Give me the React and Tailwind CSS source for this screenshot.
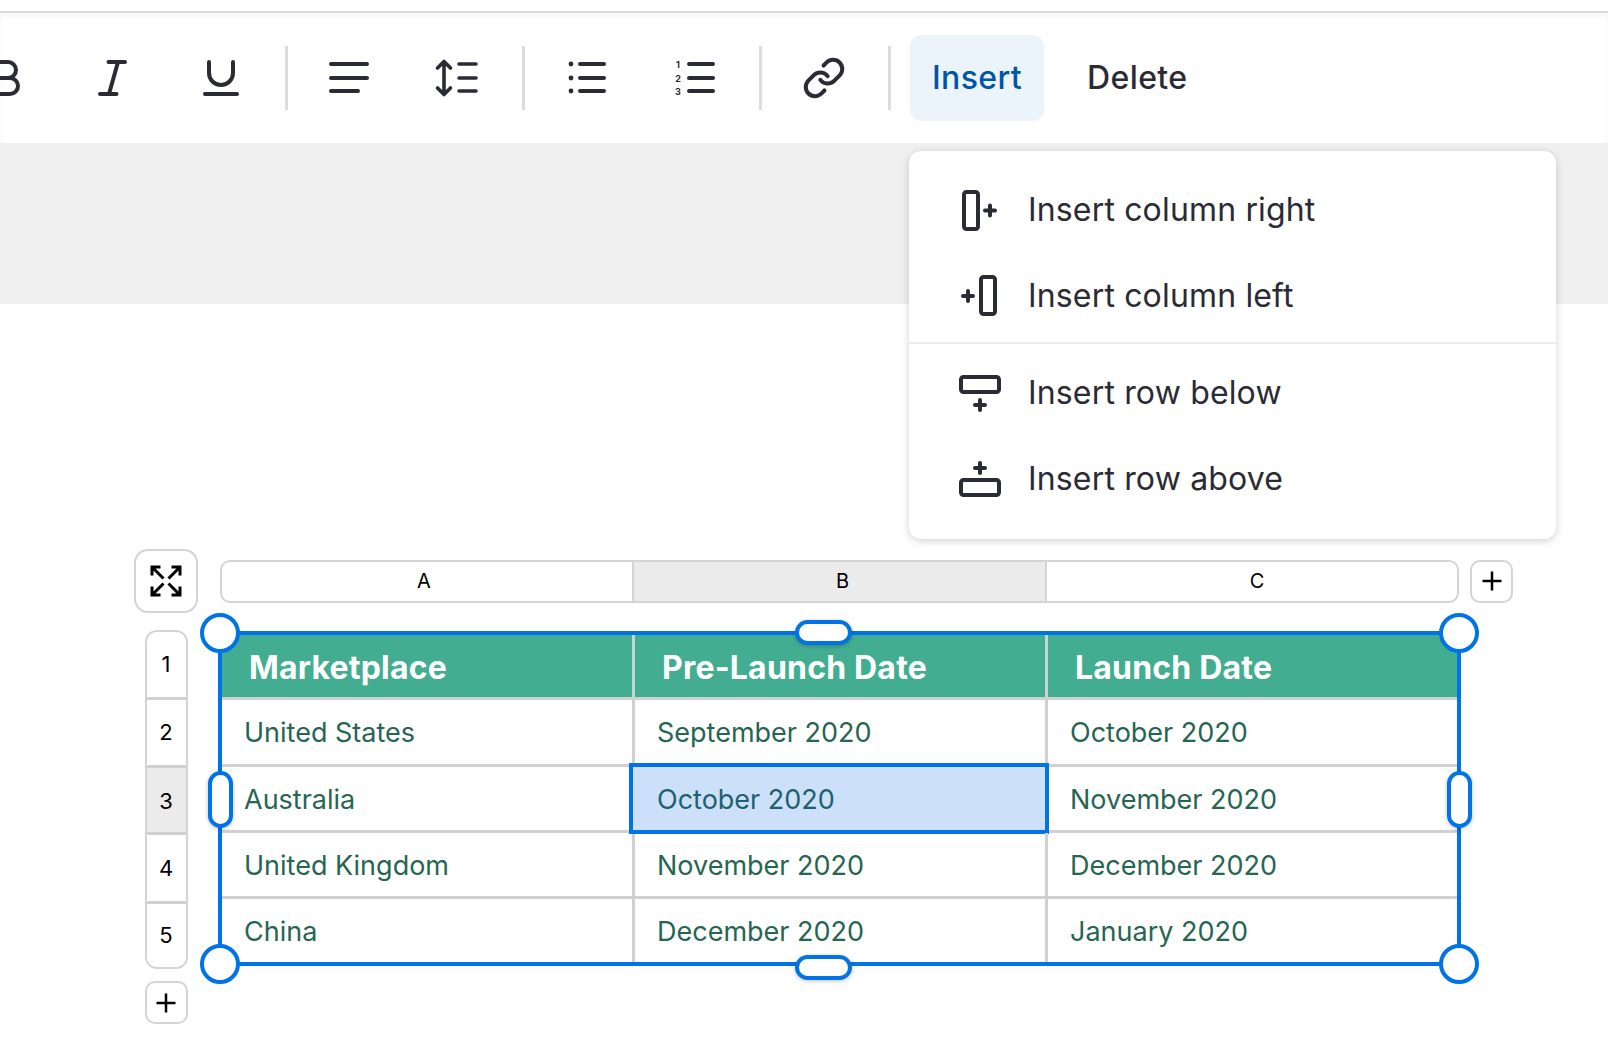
import React from "react";
import { Link } from "lucide-react";

const Divider = ({ className = "" }) => (
  <div className={`h-[64px] w-[3px] shrink-0 bg-[#dcdcdc] ${className}`} />
);

const ToolIcon = ({ className = "", children }) => (
  <svg
    width="48"
    height="48"
    viewBox="0 0 48 48"
    fill="none"
    stroke="#2b2b36"
    strokeWidth="4"
    strokeLinecap="round"
    strokeLinejoin="round"
    className={`shrink-0 ${className}`}
  >
    {children}
  </svg>
);

const MenuIcon = ({ children }) => (
  <svg
    width="48"
    height="48"
    viewBox="0 0 48 48"
    fill="none"
    stroke="#2b2b36"
    strokeWidth="4"
    strokeLinejoin="round"
    className="shrink-0"
  >
    {children}
  </svg>
);

const MenuRow = ({ label, children }) => (
  <div className="flex h-[86px] items-center pl-[47px]">
    <MenuIcon>{children}</MenuIcon>
    <span className="ml-[24px] text-[32px] tracking-[0.16px] text-[#2b2b36]">{label}</span>
  </div>
);

const Plus = ({ x, y }) => (
  <path d={`M${x - 5} ${y}H${x + 5}M${x} ${y - 5}V${y + 5}`} strokeLinecap="round" />
);

const rowNumbers = [
  { n: 1, h: "h-[68px]" },
  { n: 2, h: "h-[68px]" },
  { n: 3, h: "h-[67px] pt-[2px]", active: true },
  { n: 4, h: "h-[69px]" },
  { n: 5, h: "h-[63px]", last: true },
];

const rows = [
  { h: "h-[67px]", cells: ["United States", "September 2020", "October 2020"] },
  { h: "h-[66px]", cells: ["Australia", "October 2020", "November 2020"], selected: true },
  { h: "h-[66px]", cells: ["United Kingdom", "November 2020", "December 2020"] },
  { h: "h-[63px]", cells: ["China", "December 2020", "January 2020"], last: true },
];

const Corner = ({ className }) => (
  <div className={`absolute h-[40px] w-[40px] rounded-full border-4 border-[#0073e6] bg-white ${className}`} />
);

const Pill = ({ className }) => (
  <div className={`absolute rounded-full border-4 border-[#0073e6] bg-white shadow-[0_1px_4px_rgba(0,0,0,0.25)] ${className}`} />
);

const AddButton = ({ className = "" }) => (
  <div className={`flex h-[43px] w-[43px] items-center justify-center rounded-[10px] border-2 border-[#d4d4d4] bg-white ${className}`}>
    <svg width="24" height="24" viewBox="0 0 24 24" fill="none" stroke="#000" strokeWidth="2.5">
      <path d="M2.5 12H21.5M12 2.5V21.5" />
    </svg>
  </div>
);

export default function App() {
  return (
    <div className="relative h-[1042px] w-full overflow-hidden bg-white font-['Inter',sans-serif]">
      <div className="h-[11px]" />

      {/* toolbar */}
      <div className="flex h-[132px] items-center overflow-hidden border-t-2 border-[#dadada] shadow-[inset_0_4px_4px_rgba(0,0,0,0.04)]">
        <ToolIcon className="-ml-[24px]">
          <path d="M10 8H32a8 8 0 0 1 0 16H10M32 24H34a8 8 0 0 1 0 16H10" />
        </ToolIcon>
        <ToolIcon className="ml-[64px]">
          <path d="M20.5 8H37M12 40H28.5M30 8L21 40" />
        </ToolIcon>
        <ToolIcon className="ml-[60px]">
          <path d="M13 8V19a12 12 0 0 0 24 0V8M9 40H41" />
        </ToolIcon>
        <Divider className="ml-[41px]" />
        <ToolIcon className="ml-[37px]">
          <path d="M6 10H42M6 24H42M6 37H33" />
        </ToolIcon>
        <ToolIcon className="ml-[59px]">
          <path strokeWidth="3.6" d="M12 8V40M5.5 14L12 7.5L18.5 14M5.5 34L12 40.5L18.5 34M27 10H44M27 24H44M27 37H44" />
        </ToolIcon>
        <Divider className="ml-[42px]" />
        <ToolIcon className="ml-[39px]">
          <path d="M16 10H40M16 24H40M16 37H40" />
          <circle cx="7" cy="10" r="2.4" fill="#2b2b36" stroke="none" />
          <circle cx="7" cy="24" r="2.4" fill="#2b2b36" stroke="none" />
          <circle cx="7" cy="37" r="2.4" fill="#2b2b36" stroke="none" />
        </ToolIcon>
        <ToolIcon className="ml-[60px]">
          <path d="M17 10H41M17 24H41M17 37H41" />
          <g fill="#2b2b36" stroke="none" fontSize="9" fontWeight="700" textAnchor="middle">
            <text x="6" y="13.5">1</text>
            <text x="6" y="27.5">2</text>
            <text x="6" y="40.5">3</text>
          </g>
        </ToolIcon>
        <Divider className="ml-[39px]" />
        <Link size={44} strokeWidth={2.2} color="#2b2b36" className="ml-[40px] shrink-0" />
        <Divider className="ml-[42px]" />
        <div className="ml-[19px] flex h-[86px] w-[134px] shrink-0 items-center justify-center rounded-[12px] bg-[#ebf3fb] text-[32px] font-[450] tracking-[0.4px] text-[#0055a6]">
          Insert
        </div>
        <div className="ml-[43px] text-[32px] font-[450] tracking-[0.4px] text-[#2b2b36]">Delete</div>
      </div>

      <div className="h-[161px] bg-[#f0f0f0]" />

      {/* spreadsheet */}
      <div className="ml-[134px] mt-[245px] flex gap-[20px]">
        <div className="flex w-[64px] flex-col items-center">
          <div className="flex h-[64px] w-[64px] items-center justify-center rounded-[14px] border-2 border-[#d4d4d4]">
            <svg width="34" height="34" viewBox="0 0 34 34" fill="none" stroke="#000" strokeWidth="3">
              <path d="M3 11.5V3H11.5M3 3L14.5 14.5M22.5 3H31V11.5M31 3L19.5 14.5M3 22.5V31H11.5M3 31L14.5 19.5M22.5 31H31V22.5M31 31L19.5 19.5" />
            </svg>
          </div>
          <div className="mt-[17px] w-[43px] overflow-hidden rounded-[12px] border-2 border-[#d4d4d4]">
            {rowNumbers.map((r) => (
              <div
                key={r.n}
                className={`flex items-center justify-center text-[22px] text-black ${r.h} ${r.active ? "bg-[#ebebeb]" : "bg-white"} ${r.last ? "" : "border-b-[3px] border-[#d0d0d0]"}`}
              >
                {r.n}
              </div>
            ))}
          </div>
          <AddButton className="mt-[12px]" />
        </div>

        <div>
          <div className="flex h-[64px] items-center pl-[2px]">
            <div className="grid h-[43px] w-[1239px] grid-cols-[412px_413px_410px] overflow-hidden rounded-[10px] border-2 border-[#d4d4d4] text-[20px] text-black">
              <div className="flex items-center justify-center border-r-2 border-[#d4d4d4] pr-[6px]">A</div>
              <div className="flex items-center justify-center border-r-2 border-[#d4d4d4] bg-[#ebebeb] pl-[6px]">B</div>
              <div className="flex items-center justify-center pl-[10px]">C</div>
            </div>
            <AddButton className="ml-[11px]" />
          </div>

          <div className="relative mt-[18px] w-[1243px]">
            <div className="border-4 border-[#0073e6] bg-white">
              <div className="grid h-[65px] grid-cols-[413px_413px_409px] border-b-[3px] border-[#d0d0d0] bg-[#43ad91] text-[32px] font-bold tracking-[0.2px] text-white">
                <div className="flex items-center border-r-[3px] border-[#c4d6d0] pl-[27px] pt-[4px]">Marketplace</div>
                <div className="flex items-center border-r-[3px] border-[#c4d6d0] pl-[27px] pt-[4px]">Pre-Launch Date</div>
                <div className="flex items-center pl-[27px] pt-[4px]">Launch Date</div>
              </div>
              {rows.map((row) => (
                <div
                  key={row.cells[0]}
                  className={`grid grid-cols-[413px_413px_409px] text-[27px] text-[#276553] ${row.h} ${row.last ? "" : "border-b-[3px] border-[#d0d0d0]"}`}
                >
                  <div className="flex items-center border-r-[3px] border-[#d0d0d0] pl-[22px] pt-[3px]">{row.cells[0]}</div>
                  <div className="relative flex items-center border-r-[3px] border-[#d0d0d0] pl-[22px] pt-[3px]">
                    {row.selected ? (
                      <div className="absolute -bottom-[4px] -left-[6px] -right-[4px] -top-[4px] flex items-center border-4 border-[#0073e6] bg-[#cce1f9] pl-[24px] pt-[3px] text-[#1f6070]">
                        {row.cells[1]}
                      </div>
                    ) : (
                      row.cells[1]
                    )}
                  </div>
                  <div className="flex items-center pl-[22px] pt-[3px]">{row.cells[2]}</div>
                </div>
              ))}
            </div>

            <Corner className="-left-[18px] -top-[18px]" />
            <Corner className="-right-[18px] -top-[18px]" />
            <Corner className="-bottom-[18px] -left-[18px]" />
            <Corner className="-bottom-[18px] -right-[18px]" />
            <Pill className="-top-[11px] left-[577px] h-[25px] w-[57px]" />
            <Pill className="-bottom-[14px] left-[577px] h-[25px] w-[57px]" />
            <Pill className="-left-[10px] top-[140px] h-[57px] w-[25px]" />
            <Pill className="-right-[11px] top-[140px] h-[57px] w-[25px]" />
          </div>
        </div>
      </div>

      {/* insert dropdown */}
      <div className="absolute left-[909px] top-[151px] w-[647px] rounded-[12px] bg-white pb-[17px] pt-[16px] shadow-[0_2px_8px_rgba(0,0,0,0.18)]">
        <MenuRow label="Insert column right">
          <rect x="8" y="6" width="14" height="37" rx="2.5" />
          <Plus x={34} y={24.5} />
        </MenuRow>
        <MenuRow label="Insert column left">
          <rect x="25" y="5" width="14" height="37" rx="2.5" />
          <Plus x={12} y={24} />
        </MenuRow>
        <div className="mb-[6px] mt-[3px] h-[2px] bg-[#ececec]" />
        <MenuRow label="Insert row below">
          <rect x="5" y="8" width="38" height="15" rx="2.5" />
          <Plus x={24} y={36} />
        </MenuRow>
        <MenuRow label="Insert row above">
          <rect x="5" y="25" width="38" height="15" rx="2.5" />
          <Plus x={24} y={13} />
        </MenuRow>
      </div>
    </div>
  );
}
